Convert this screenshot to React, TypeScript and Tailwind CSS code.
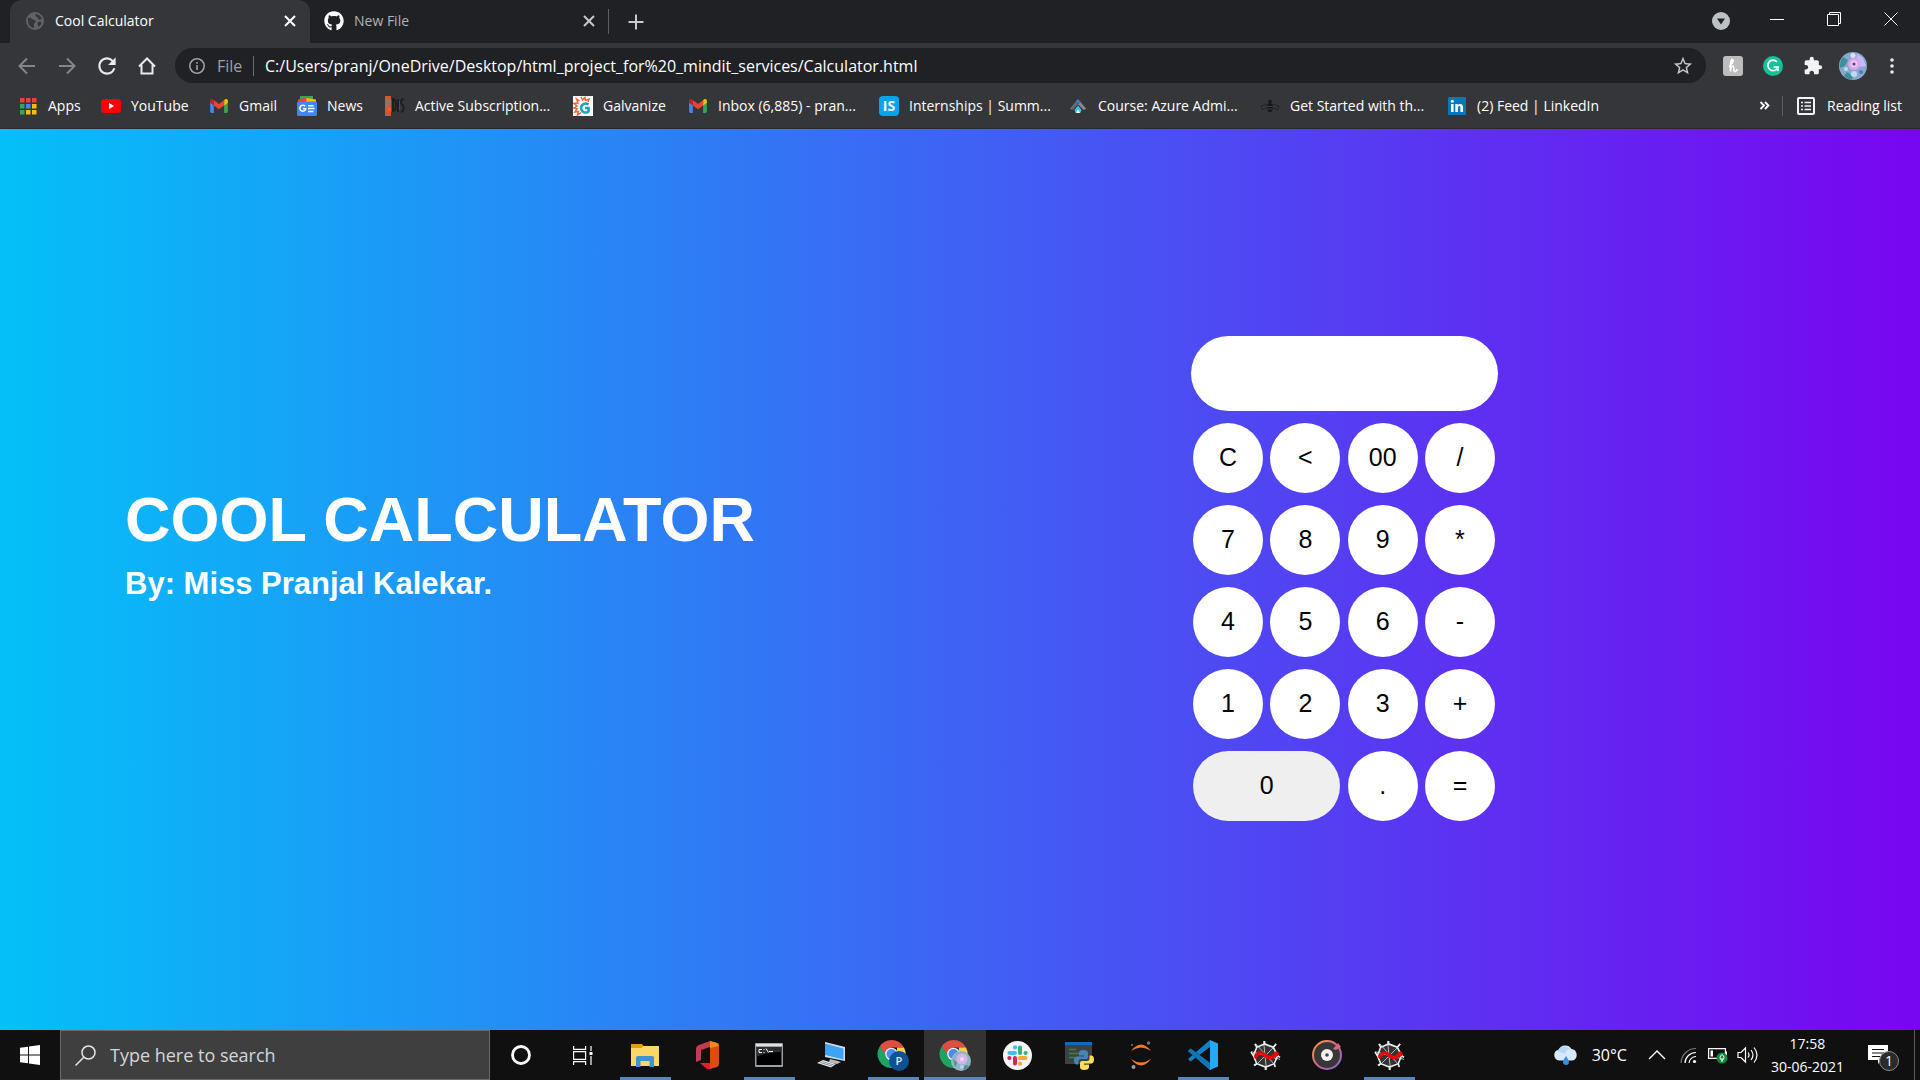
import { useState, type ReactNode } from "react";
import { FaGithub } from "react-icons/fa";
import { MdExtension, MdStarBorder, MdRefresh } from "react-icons/md";

/* ---------- Browser icons ---------- */

function GlobeIcon() {
  return (
    <svg className="size-[18px] shrink-0" viewBox="0 0 18 18">
      <circle cx="9" cy="9" r="9" fill="#5f6368" />
      <path d="M2 6c2-.5 3 0 4 1s3 .5 3.500 2-1 2-1.500 3 .5 2.500-.5 4C3.500 15 1.500 12 2 6zM9 2c1 .5 0 2 1 2.500S12 5 12 6.500s2 1.500 3.800.5C15 4 12.500 1.800 9 2zM12 10c1.500-.5 3 0 3.500 1-.5 1.500-1.500 3-3 3.500C11.500 13 11 11 12 10z" fill="#35363a" />
    </svg>
  );
}

function Stroke({ d, size = "size-[20px]", w = 2 }: { d: string; size?: string; w?: number }) {
  return (
    <svg className={size + " shrink-0"} viewBox="0 0 20 20" fill="none" stroke="currentColor" strokeWidth={w}>
      <path d={d} />
    </svg>
  );
}

const CLOSE = "M5 5l10 10M15 5L5 15";

function GmailIcon() {
  return (
    <svg className="h-[14px] w-[18px]" viewBox="0 0 19 15">
      <path d="M0 2v11.500A1.500 1.500 0 0 0 1.500 15H4V5z" fill="#4285f4" />
      <path d="M19 2v11.500a1.500 1.500 0 0 1-1.500 1.500H15V5z" fill="#34a853" />
      <path d="M15 1.500V7l4-3V2c0-2-2-2.600-3.400-1.500z" fill="#fbbc04" />
      <path d="M0 2v2l4 3V1.500L3.400.5C2-.6 0 0 0 2z" fill="#c5221f" />
      <path d="M4 1.200V7l5.500 4L15 7V1.200L9.500 5.300z" fill="#ea4335" />
    </svg>
  );
}

const bookmarks: { label: string; width: string; icon: ReactNode }[] = [
  {
    label: "Apps",
    width: "w-[83px]",
    icon: (
      <svg className="size-[18px]" viewBox="0 0 18 18">
        {["#ea4335", "#ea4335", "#ea4335", "#34a853", "#4285f4", "#fbbc04", "#34a853", "#fbbc04", "#fbbc04"].map((c, i) => (
          <rect key={i} x={1 + (i % 3) * 6} y={1 + Math.floor(i / 3) * 6} width="4.500" height="4.500" fill={c} />
        ))}
      </svg>
    ),
  },
  {
    label: "YouTube",
    width: "w-[108px]",
    icon: (
      <svg className="h-[14px] w-[20px]" viewBox="0 0 20 14">
        <rect width="20" height="14" rx="3.500" fill="#f00" />
        <path d="M8 4l5.200 3L8 10z" fill="#fff" />
      </svg>
    ),
  },
  { label: "Gmail", width: "w-[88px]", icon: <GmailIcon /> },
  {
    label: "News",
    width: "w-[88px]",
    icon: (
      <svg className="size-[20px]" viewBox="0 0 20 20">
        <path d="M3 0h13v5H3z" fill="#34a853" />
        <path d="M1 3.500l11-2.500 2 5H1z" fill="#ea4335" />
        <path d="M9.500 2l9.500 1.500V7H9z" fill="#fbbc04" />
        <rect y="5.500" width="20" height="14.500" rx="1.500" fill="#4285f4" />
        <path d="M8.200 10.300A3 3 0 1 0 8.800 12.800H6M11 9.800h5.500M11 12.600h6.500M11 15.400h5.500" stroke="#fff" strokeWidth="1.500" fill="none" />
      </svg>
    ),
  },
  {
    label: "Active Subscription...",
    width: "w-[188px]",
    icon: (
      <svg className="size-[20px]" viewBox="0 0 20 20">
        <path d="M0 0h6v20H0z" fill="#d9532c" />
        <path d="M1 3h5v6H3v3H1z" fill="#8f7468" />
        <path d="M3 12a2 2 0 0 1 3 0v3H3z" fill="#ff5a1f" />
        <path d="M8 2v14M8 3c4 0 4 12 0 12M13 3v13M18.500 3c-3 0-3 5-1 6s1 7-1.500 7" stroke="#1d1d1f" strokeWidth="1.800" fill="none" />
        <path d="M6.500 4v12M14.500 5v9" stroke="#5a5a5d" strokeWidth=".7" />
      </svg>
    ),
  },
  {
    label: "Galvanize",
    width: "w-[115px]",
    icon: (
      <svg className="size-[20px]" viewBox="0 0 20 20">
        <rect width="20" height="20" fill="#fff" />
        <path d="M8 1l1.500 3L12 1.500l.5 3L16 3l-1 3M6.500 5L3.500 3 5 7 1 7.500l3 2.500-3 2 3 1-2 3 3.500-.5L4.500 19 8 16.500" fill="none" stroke="#f2643a" strokeWidth="1.500" />
        <path d="M15.500 8.500A4.500 4.500 0 1 0 15.500 15.500V12H12" stroke="#19a5b8" strokeWidth="2.600" fill="none" />
      </svg>
    ),
  },
  { label: "Inbox (6,885) - pran...", width: "w-[191px]", icon: <GmailIcon /> },
  {
    label: "Internships | Summ...",
    width: "w-[189px]",
    icon: (
      <span className="flex size-[20px] items-center justify-center rounded-sm bg-[#00a5ec] text-sm font-bold text-white" aria-hidden="true">
        IS
      </span>
    ),
  },
  {
    label: "Course: Azure Admi...",
    width: "w-[192px]",
    icon: (
      <svg className="h-[14px] w-[18px]" viewBox="0 0 19 16">
        <path d="M7 3L0 11l3 1.500L9.500 6z" fill="#6b6b6b" />
        <path d="M12 3l7 8-3 1.500L9.500 6z" fill="#8a8a8a" />
        <path d="M9.500 0l3 3-3 2.500-3-2.500z" fill="#2f7fe0" />
        <path d="M9.500 7.500l4 5-1 3h-6l-1-3z" fill="#35c5f0" />
        <path d="M9.500 12l2.500 4H7z" fill="#e8fbff" />
      </svg>
    ),
  },
  {
    label: "Get Started with th...",
    width: "w-[187px]",
    icon: (
      <svg className="size-[20px]" viewBox="0 0 20 20">
        <ellipse cx="10" cy="11.500" rx="2.800" ry="4.500" fill="#151515" />
        <circle cx="10" cy="5.500" r="2" fill="#1c1c1e" />
        <path d="M8 8L1 10l1.500 4L8 11zM12 8l7 2-1.500 4L12 11z" fill="none" stroke="#222325" />
        <path d="M8 3.500L7 2M12 3.500L13 2M7.500 10.500h5M7.500 13h5" stroke="#3c3c3f" />
      </svg>
    ),
  },
  {
    label: "(2) Feed | LinkedIn",
    width: "w-[170px]",
    icon: (
      <svg className="size-[18px]" viewBox="0 0 18 18">
        <rect width="18" height="18" rx="1" fill="#0a77b7" />
        <circle cx="4.300" cy="4.300" r="1.500" fill="#fff" />
        <path d="M3 7h2.600v8H3zM7.300 7h2.500v1.200C11 6.200 15 6.300 15 10v5h-2.600v-4.500c0-2.200-2.500-2-2.500 0V15H7.300z" fill="#fff" />
      </svg>
    ),
  },
];

function Avatar({ className }: { className: string }) {
  return (
    <svg className={className} viewBox="0 0 28 28">
      <circle cx="14" cy="14" r="14" fill="#86a9cf" />
      <path d="M4 5l5 3-3 6-5 2A14 14 0 0 1 4 5zM8 20l6 4-1 4a14 14 0 0 1-8-4z" fill="#3f8f9c" />
      <path d="M18 2l6 4 3 8-6 1-4-6z" fill="#c9b8f5" />
      <circle cx="15" cy="12" r="6" fill="#d9a6ea" />
      <circle cx="15" cy="12" r="3.500" fill="#f2c3f4" />
      <circle cx="15" cy="12" r="1.500" fill="#3a4a9c" />
      <circle cx="14" cy="3.500" r="2.500" fill="#e3d9fa" />
      <circle cx="15" cy="22" r="3" fill="#c5d8ef" />
      <circle cx="22" cy="20" r="2" fill="#5577b8" />
      <circle cx="7" cy="17" r="2" fill="#b5e0e0" />
    </svg>
  );
}

/* ---------- Browser chrome ---------- */

function TabStrip() {
  return (
    <div className="flex h-[43px] bg-[#202124] pl-[10px]">
      <div className="flex w-[300px] items-center rounded-t-xl bg-[#35363a] pr-[10px] pb-px pl-4">
        <GlobeIcon />
        <span className="ml-[11px] flex-1 text-sm text-white">Cool Calculator</span>
        <button aria-label="Close Cool Calculator" className="text-white">
          <Stroke d={CLOSE} size="size-[20px]" w={2} />
        </button>
      </div>
      <div className="flex w-[298px] items-center pr-[9px] pb-px pl-[14px]">
        <FaGithub className="size-[20px] shrink-0 text-white" />
        <span className="ml-[10px] flex-1 text-sm text-[#b0b4b9]">New File</span>
        <button aria-label="Close New File" className="text-[#c4c7cb]">
          <Stroke d={CLOSE} size="size-[20px]" w={2} />
        </button>
      </div>
      <div className="h-[25px] w-px self-center bg-[#5b5d61]" />
      <button aria-label="New tab" className="ml-[17px] text-[#c8cbcf]">
        <Stroke d="M10 2.500v15M2.500 10h15" />
      </button>
      <div className="ml-auto flex items-start pr-px text-white">
        <button aria-label="Search tabs" className="mt-3 mr-[18px]">
          <svg className="size-[18px]" viewBox="0 0 18 18">
            <circle cx="9" cy="9" r="9" fill="#bdc1c6" />
            <path d="M5 6.500h8L9 12.500z" fill="#202124" />
          </svg>
        </button>
        <button aria-label="Minimize" className="flex h-[37px] w-[57px] items-center justify-center">
          <svg className="size-[14px]" viewBox="0 0 14 14" stroke="#fff"><path d="M0 7.500h14" /></svg>
        </button>
        <button aria-label="Restore" className="flex h-[37px] w-[57px] items-center justify-center">
          <svg className="size-[14px]" viewBox="0 0 14 14" stroke="#fff" fill="none"><path d="M.5 2.500h11v11H.5zM2.500 2V.5h11v11H12" /></svg>
        </button>
        <button aria-label="Close window" className="flex h-[37px] w-[57px] items-center justify-center">
          <svg className="size-[14px]" viewBox="0 0 14 14" stroke="#fff"><path d="M.5.5l13 13M13.500.5l-13 13" /></svg>
        </button>
      </div>
    </div>
  );
}

function Toolbar() {
  return (
    <div className="flex h-[45px] items-center bg-[#35363a] pr-[18px] pl-[17px]">
      <div className="flex gap-5 text-[#e8eaed]">
        <button aria-label="Back" className="text-[#84868a]"><Stroke d="M18 10H3M10 2.500L2.500 10l7.500 7.500" /></button>
        <button aria-label="Forward" className="text-[#84868a]"><Stroke d="M2 10h15M10 2.500l7.500 7.500-7.500 7.500" /></button>
        <button aria-label="Reload"><MdRefresh className="-m-[3px] size-[26px]" /></button>
        <button aria-label="Home"><Stroke d="M2 10.500L10 2.500l8 8M4.500 9v8.500h11V9" /></button>
      </div>
      <div className="ml-[18px] flex h-[35px] flex-1 items-center rounded-full bg-[#202124] pr-[12px] pl-[14px]">
        <svg className="size-[16px] shrink-0" viewBox="0 0 16 16" fill="none" stroke="#9aa0a6" strokeWidth="1.600">
          <circle cx="8" cy="8" r="7.200" />
          <path d="M8 7v5M8 4v1.800" />
        </svg>
        <span className="w-[48px] pl-[12px] text-base text-[#9aa0a6]">File</span>
        <div className="h-[20px] w-px bg-[#6b6e72]" />
        <input
          aria-label="Address"
          className="ml-[11px] min-w-0 flex-1 bg-transparent text-base text-white outline-none"
          defaultValue="C:/Users/pranj/OneDrive/Desktop/html_project_for%20_mindit_services/Calculator.html"
        />
        <button aria-label="Bookmark this page" className="text-[#c4c7cb]"><MdStarBorder className="size-[22px]" /></button>
      </div>
      <div className="ml-[17px] flex items-center">
        <button aria-label="Honey" className="mr-[20px]">
          <svg className="size-[20px]" viewBox="0 0 20 20">
            <rect width="20" height="20" rx="3" fill="#bdbdbd" />
            <path d="M6 10c3-1 5-6 3.500-6.500S7 8 7.500 15.500c0-3 1-5.500 2.500-5.500s0 5 1.500 5.500S14 14 14 13" fill="none" stroke="#fff" strokeWidth="1.700" />
          </svg>
        </button>
        <button aria-label="Grammarly" className="mr-[20px]">
          <svg className="size-[20px]" viewBox="0 0 20 20">
            <circle cx="10" cy="10" r="10" fill="#15c39a" />
            <path d="M14 6a5.200 5.200 0 1 0 1 5h-4.500M15 11v4" fill="none" stroke="#fff" strokeWidth="1.700" />
          </svg>
        </button>
        <button aria-label="Extensions" className="mr-[16px] text-[#f1f3f4]"><MdExtension className="size-[20px]" /></button>
        <button aria-label="Profile" className="mr-[15px]"><Avatar className="size-[28px]" /></button>
        <button aria-label="Menu">
          <svg className="h-[20px] w-[20px]" viewBox="0 0 20 20" fill="#e8eaed">
            <circle cx="10" cy="4" r="1.800" /><circle cx="10" cy="10" r="1.800" /><circle cx="10" cy="16" r="1.800" />
          </svg>
        </button>
      </div>
    </div>
  );
}

function BookmarkBar() {
  return (
    <nav aria-label="Bookmarks" className="flex h-[41px] items-center border-b border-[#28292c] bg-[#35363a] px-[18px] pb-1 text-sm text-white">
      {bookmarks.map((b) => (
        <a key={b.label} href="#" className={b.width + " flex shrink-0 items-center gap-[10px] whitespace-nowrap"}>
          <span className="flex w-[20px] shrink-0 justify-center">{b.icon}</span>
          {b.label}
        </a>
      ))}
      <button aria-label="More bookmarks" className="ml-auto">
        <Stroke d="M6.500 6l3.500 3.500L6.500 13M11 6l3.500 3.500L11 13" w={1.8} />
      </button>
      <div className="mx-[8px] h-[20px] w-px bg-[#5b5d61]" />
      <button className="ml-[6px] flex items-center gap-[12px] whitespace-nowrap">
        <svg className="size-[18px]" viewBox="0 0 18 18" fill="none" stroke="#f1f3f4">
          <rect x="1" y="1" width="16" height="16" rx="1" strokeWidth="2" />
          <path d="M4 5.500h2M4 9h2M4 12.500h2M7.500 5.500H14M7.500 9H14M7.500 12.500H14" strokeWidth="1.500" />
        </svg>
        Reading list
      </button>
    </nav>
  );
}

/* ---------- Calculator ---------- */

const keys = ["C", "<", "00", "/", "7", "8", "9", "*", "4", "5", "6", "-", "1", "2", "3", "+", "0", ".", "="];

function evaluate(expression: string): string {
  const tokens = expression.match(/\d*\.?\d+|[-+*/]/g);
  if (!tokens) return "";
  const terms: number[] = [];
  let op = "+";
  for (const t of tokens) {
    if (/^[-+*/]$/.test(t)) {
      op = t;
      continue;
    }
    const n = Number(t);
    if (op === "*") terms.push((terms.pop() ?? 0) * n);
    else if (op === "/") terms.push((terms.pop() ?? 0) / n);
    else terms.push(op === "-" ? -n : n);
  }
  return String(terms.reduce((a, b) => a + b, 0));
}

function Calculator() {
  const [value, setValue] = useState("");
  const press = (key: string) => {
    if (key === "C") setValue("");
    else if (key === "<") setValue(value.slice(0, -1));
    else if (key === "=") setValue(evaluate(value));
    else setValue(value + key);
  };
  return (
    <div className="flex flex-col items-center gap-3">
      <input
        aria-label="Result"
        readOnly
        value={value}
        className="h-[75px] w-[307px] rounded-full bg-white px-6 text-right text-[25px] text-black outline-none"
      />
      <div className="grid w-[302px] grid-cols-[repeat(4,70px)] justify-between gap-y-[12px] pb-[2px]">
        {keys.map((k) => (
          <button
            key={k}
            onClick={() => press(k)}
            className={(k === "0" ? "col-span-2 bg-[#efefef]" : "bg-white") + " h-[70px] rounded-full text-[25px] text-black"}
          >
            {k}
          </button>
        ))}
      </div>
    </div>
  );
}

/* ---------- Taskbar ---------- */

function Chrome({ children }: { children: ReactNode }) {
  return (
    <svg className="size-[32px]" viewBox="0 0 32 32">
      <path d="M14.500 1A14 14 0 0 1 27 8.500H14.500L8.500 18 2.700 7.500A14 14 0 0 1 14.500 1z" fill="#dd4f43" />
      <path d="M27 8.500A14 14 0 0 1 14 29l6-11V8.500z" fill="#fdd04c" />
      <path d="M2.700 7.500A14 14 0 0 0 14 29l5-9-8-1z" fill="#1da362" />
      <circle cx="14.500" cy="15" r="6.300" fill="#f4f4f4" />
      <circle cx="14.500" cy="15" r="5" fill="#4a8af4" />
      {children}
    </svg>
  );
}

function Spyder() {
  return (
    <svg className="size-[31px]" viewBox="0 0 32 32" fill="none">
      <path d="M16 5l7 3 4 8-3 7-8 4-8-3-4-8 4-8z" fill="#333" />
      <path d="M14 1l3 30M1 12l30 8M6 4l20 22M27 5L5 27" stroke="#bdbdbd" strokeWidth="1" />
      <path d="M15 4l9 3.500 4.500 8.500-3.500 8.500-9 3.500-9-3.500L3.500 16 7 7.500z" stroke="#ececec" strokeWidth="1.700" />
      <path d="M15 1v3M27 4l-3 3.500M31 18l-3-2M26 28l-1-3.500M16 31v-3M4 26l3-1.500M1 12.500L3.500 16M5 4l2 3.500" stroke="#ececec" strokeWidth="1.700" />
      <path d="M6 17.500C9 11 13 13 16 16s6 3.500 11-2" stroke="#f00000" strokeWidth="3.400" strokeLinecap="round" />
      <circle cx="27" cy="14.500" r="2.600" fill="#f00000" />
    </svg>
  );
}

const taskItems: { label: string; open?: boolean; active?: boolean; icon: ReactNode }[] = [
  {
    label: "Cortana",
    icon: (
      <svg className="size-[22px]" viewBox="0 0 22 22"><circle cx="11" cy="11" r="8.500" fill="none" stroke="#fff" strokeWidth="2.800" /></svg>
    ),
  },
  {
    label: "Task view",
    icon: (
      <svg className="size-[20px]" viewBox="0 0 20 20" fill="none" stroke="#fff" strokeWidth="1.200">
        <path d="M.6 1v3.400h12V1M.6 6.600h12v7.800H.6zM.6 20v-3.400h12V20M18 1v5M18 11v9" />
        <path d="M16.500 7h3v3h-3z" fill="#fff" stroke="none" />
      </svg>
    ),
  },
  {
    label: "File Explorer",
    open: true,
    icon: (
      <svg className="h-[24px] w-[28px]" viewBox="0 0 28 24">
        <path d="M0 1h11l2 2.500h14V9H0z" fill="#dd9f0c" />
        <path d="M0 5h10.500l2-2H28v20H0z" fill="#fcd667" />
        <path d="M5 24V15q0-2 2-2h14q2 0 2 2v9h-4.500v-6h-9v6z" fill="#3e93d5" />
      </svg>
    ),
  },
  {
    label: "Office",
    icon: (
      <svg className="size-[28px]" viewBox="0 0 28 28">
        <path d="M17 0L6 4Q3 5 3 8v13l5-2V9l9-3z" fill="#c13b55" />
        <path d="M17 0l7 2q2 .5 2 3v18q0 2-2 3l-7 2z" fill="#e04a0a" />
        <path d="M17 0l7 2q2 .5 2 3l-9 2z" fill="#f58a10" />
        <path d="M7 22h10v6h-3z" fill="#e0202a" />
      </svg>
    ),
  },
  {
    label: "Command Prompt",
    open: true,
    icon: (
      <svg className="h-[24px] w-[28px]" viewBox="0 0 28 24">
        <rect width="28" height="24" rx="1" fill="#9aa1a8" />
        <rect x="1" y="1" width="26" height="2" fill="#dfe3e6" />
        <rect x="1.500" y="4" width="25" height="18" fill="#000" />
        <path d="M1.500 14Q12 9 26.500 9V4h-25z" fill="#2c2c2c" />
        <path d="M7 6.500H4v3h3M9 6v1M9 9v1M11 5.500l2.500 4M14 8.500h4" stroke="#fff" fill="none" />
      </svg>
    ),
  },
  {
    label: "Remote Desktop",
    icon: (
      <svg className="size-[28px]" viewBox="0 0 28 28">
        <path d="M8 1l20 5v14L8 16z" fill="#d6dde3" />
        <path d="M8 2.500l18.500 5v11L8 14z" fill="#3fa3f5" />
        <path d="M13 18l6 1.500 5 1.500-4 2-8-2z" fill="#b7bec4" />
        <path d="M0 22l6-3 13 4-5 3.500z" fill="#e5e8ea" />
        <path d="M3 21.500l12 3.500M5 20.500l12 3.500" stroke="#8f979e" />
      </svg>
    ),
  },
  {
    label: "Chrome, profile P",
    open: true,
    icon: (
      <Chrome>
        <circle cx="22" cy="22" r="10" fill="#0b5394" />
        <text x="22" y="26" textAnchor="middle" fontSize="11" fontWeight="600" fill="#e5edf5">P</text>
      </Chrome>
    ),
  },
  {
    label: "Chrome",
    open: true,
    active: true,
    icon: (
      <Chrome>
        <circle cx="22" cy="22" r="10" fill="#8fb4c4" />
        <circle cx="23" cy="20" r="5.500" fill="#d7b3ea" />
        <circle cx="23" cy="20" r="2" fill="#f0d8f8" />
        <path d="M14 20l4 4-2 4zM22 29l5-3 3 1-4 4z" fill="#4e8c98" />
        <circle cx="23" cy="28" r="2" fill="#bcd0e8" />
      </Chrome>
    ),
  },
  {
    label: "Slack",
    icon: (
      <svg className="size-[29px]" viewBox="0 0 29 29" strokeLinecap="round" strokeWidth="4" fill="none">
        <circle cx="14.500" cy="14.500" r="14.500" fill="#f4f4f4" />
        <path d="M12 6.500v-.2M6.500 12h5.500" stroke="#36c5f0" />
        <path d="M17 6.500V12M22.500 12h.2" stroke="#2eb67d" />
        <path d="M17 17h5.500M17 22.500v.2" stroke="#ecb22e" />
        <path d="M12 17v5.500M6.500 17h-.2" stroke="#e01e5a" />
      </svg>
    ),
  },
  {
    label: "Python IDLE",
    icon: (
      <svg className="size-[30px]" viewBox="0 0 30 30">
        <rect x="1" y="2" width="27" height="22" fill="#3f4245" />
        <rect x="1" y="2" width="27" height="3" fill="#0a6ec0" />
        <path d="M5 9.500h7M5 13.500h11M5 17.500h6" stroke="#2f8a3a" strokeWidth="1.300" />
        <path d="M19 10q-4 0-4 3v2.500h5v1h-7q-3 0-3 4t3 4h1.500v-3q0-2.500 2.500-2.500h5q2 0 2-2V13q0-3-5-3z" fill="#4584b6" />
        <path d="M20 30q5 0 5-3v-2.500h-5v-1h7q3 0 3-4t-3-4h-1.500v3q0 2.500-2.500 2.500h-5q-2 0-2 2V27q0 3 4 3z" fill="#ffde57" />
      </svg>
    ),
  },
  {
    label: "Jupyter",
    icon: (
      <svg className="size-[28px]" viewBox="0 0 28 28">
        <path d="M4 10Q14-3 24 10 14 3 4 10zM4 18Q14 31 24 18 14 25 4 18z" fill="#f37726" />
        <circle cx="21.500" cy="2" r="1.700" fill="#767677" />
        <circle cx="5" cy="4" r="1" fill="#767677" />
        <circle cx="6.500" cy="26" r="2" fill="#9e9e9e" />
      </svg>
    ),
  },
  {
    label: "Visual Studio Code",
    open: true,
    icon: (
      <svg className="size-[30px]" viewBox="0 0 30 30">
        <path d="M0 19l2.500 2.500L22 7V0zM22 30L0 11l2.500-2.500L22 23z" fill="#0b83c9" />
        <path d="M0 11l2.500-2.500L22 23v7z" fill="#1273b5" />
        <path d="M22 0l8 3.500v23L22 30z" fill="#27a8f2" />
      </svg>
    ),
  },
  { label: "Spyder", icon: <Spyder /> },
  {
    label: "Groove Music",
    icon: (
      <svg className="size-[30px]" viewBox="0 0 30 30">
        <defs>
          <linearGradient id="ring" x1="0" y1="0" x2="1" y2="1">
            <stop offset="0" stopColor="#ff9a3c" />
            <stop offset="0.500" stopColor="#d06a8c" />
            <stop offset="1" stopColor="#8a63d8" />
          </linearGradient>
        </defs>
        <circle cx="15" cy="15" r="14" fill="#373737" stroke="url(#ring)" strokeWidth="2" />
        <path d="M21 9l5-6 3 4-5 3z" fill="#cf6b7d" />
        <circle cx="15" cy="15" r="6" fill="#f2f2f2" />
        <circle cx="15" cy="15" r="1.800" fill="#444" />
      </svg>
    ),
  },
  { label: "Spyder project", open: true, icon: <Spyder /> },
];

function Taskbar() {
  return (
    <footer className="flex h-[50px] items-stretch bg-[#101010] text-white">
      <button aria-label="Start" className="flex w-[60px] items-center justify-center">
        <svg className="size-[20px]" viewBox="0 0 20 20" fill="#fff">
          <path d="M0 2.800l8-1.100v7.800H0zM9 1.500L20 0v9.500H9zM0 10.500h8v7.800l-8-1.100zM9 10.500h11V20L9 18.500z" />
        </svg>
      </button>
      <label className="flex w-[430px] items-center border border-[#6a6a6a] bg-[#3f3f3f] pl-[14px]">
        <svg className="size-[21px] shrink-0" viewBox="0 0 21 21" fill="none" stroke="#e6e6e6" strokeWidth="1.500">
          <circle cx="13.500" cy="7.500" r="6.500" />
          <path d="M9 12L.5 20.500" />
        </svg>
        <input aria-label="Type here to search" placeholder="Type here to search" className="ml-[14px] min-w-0 flex-1 bg-transparent text-lg text-white outline-none placeholder:text-[#d6d6d6]" />
      </label>
      {taskItems.map((t) => (
        <button
          key={t.label}
          aria-label={t.label}
          className={(t.active ? "bg-[#333333]" : "") + " flex w-[62px] shrink-0 flex-col items-center"}
        >
          <span className="flex flex-1 items-center pt-[3px]">{t.icon}</span>
          <span className={(t.active ? "w-full " : "w-[51px] ") + (t.open ? "bg-[#5a86b8]" : "") + " h-[3px]"} />
        </button>
      ))}
      <div className="ml-auto flex items-center">
        <button className="flex items-center gap-[13px] text-base">
          <svg className="h-[20px] w-[26px]" viewBox="0 0 26 20">
            <path d="M6 15.500a5.500 5.500 0 0 1-.5-10.800A7.500 7.500 0 0 1 18.500 4 6 6 0 0 1 20 15.500z" fill="#d5e9f9" />
            <path d="M5 6a7 7 0 0 1 12-2 6 6 0 0 0-5 5z" fill="#b4d8f4" />
            <path d="M13 11q3 4 3 6a3 3 0 0 1-6 0q0-2 3-6z" fill="#3b8de0" />
          </svg>
          30°C
        </button>
        <button aria-label="Show hidden icons" className="ml-[21px]">
          <svg className="size-[18px]" viewBox="0 0 18 18" fill="none" stroke="#fff" strokeWidth="1.400"><path d="M1 13l8-8 8 8" /></svg>
        </button>
        <button aria-label="Network" className="ml-[14px]">
          <svg className="size-[17px]" viewBox="0 0 17 17" fill="none" stroke="#fff" strokeWidth="1.200">
            <path d="M1 16A15 15 0 0 1 16 1.500" stroke="#777" />
            <path d="M5 16A11 11 0 0 1 16 5.500M9 16A7.500 7.500 0 0 1 16 9.500" />
            <circle cx="14.500" cy="14.500" r="1.600" fill="#fff" stroke="none" />
          </svg>
        </button>
        <button aria-label="Battery" className="ml-[11px]">
          <svg className="h-[17px] w-[20px]" viewBox="0 0 20 17">
            <path d="M.6 1.600h16.800v9.800H.6z" fill="none" stroke="#fff" strokeWidth="1.200" />
            <path d="M2.500 3.500H5v6H2.500zM18 4.500h1v4h-1z" fill="#fff" />
            <circle cx="14" cy="11" r="5.500" fill="#10893e" />
            <path d="M14 7.500q4 3 0 6-4-3 0-6zM14 11v4" fill="none" stroke="#fff" />
          </svg>
        </button>
        <button aria-label="Volume" className="ml-[9px]">
          <svg className="h-[18px] w-[21px]" viewBox="0 0 21 18" fill="none" stroke="#fff" strokeWidth="1.200">
            <path d="M1 6.500h3L8.500 2v14L4 11.500H1zM11 6.500q2 2.500 0 5M14 4q4 5 0 10M17 1.500q6 7.500 0 15" />
          </svg>
        </button>
        <div className="ml-[13px] flex flex-col items-center text-sm leading-[23px]">
          <span>17:58</span>
          <span>30-06-2021</span>
        </div>
        <button aria-label="Notifications, 1 new" className="relative ml-[24px] h-[32px] w-[31px]">
          <svg className="size-[20px]" viewBox="0 0 20 20">
            <path d="M0 0h20v15h-7l-3 4v-4H0z" fill="#fff" />
            <path d="M4 4.500h12M4 8h12M4 11.500h8" stroke="#101010" strokeWidth="1.200" />
          </svg>
          <span className="absolute right-0 bottom-0 flex size-[20px] items-center justify-center rounded-full border border-[#8a8a8a] bg-[#2b2b2b] text-sm">1</span>
        </button>
      </div>
      <div className="mr-[5px] ml-[15px] w-px bg-[#5a5a5a]" />
    </footer>
  );
}

export default function App() {
  return (
    <div className="flex min-h-screen flex-col font-['Open_Sans','Noto_Sans',sans-serif]">
      <header>
        <TabStrip />
        <Toolbar />
        <BookmarkBar />
      </header>
      <main className="grid flex-1 grid-cols-[2fr_3fr] items-center bg-linear-to-r/srgb from-[#04c0f8] to-[#7805f0] font-['Liberation_Sans',Arial,sans-serif]">
        <div className="pb-[76px] pl-[125px] font-bold whitespace-nowrap text-white">
          <h1 className="text-[63px] leading-[76px]">COOL CALCULATOR</h1>
          <h2 className="mt-2 text-[31px] leading-[38px]">By: Miss Pranjal Kalekar.</h2>
        </div>
        <Calculator />
      </main>
      <Taskbar />
    </div>
  );
}
